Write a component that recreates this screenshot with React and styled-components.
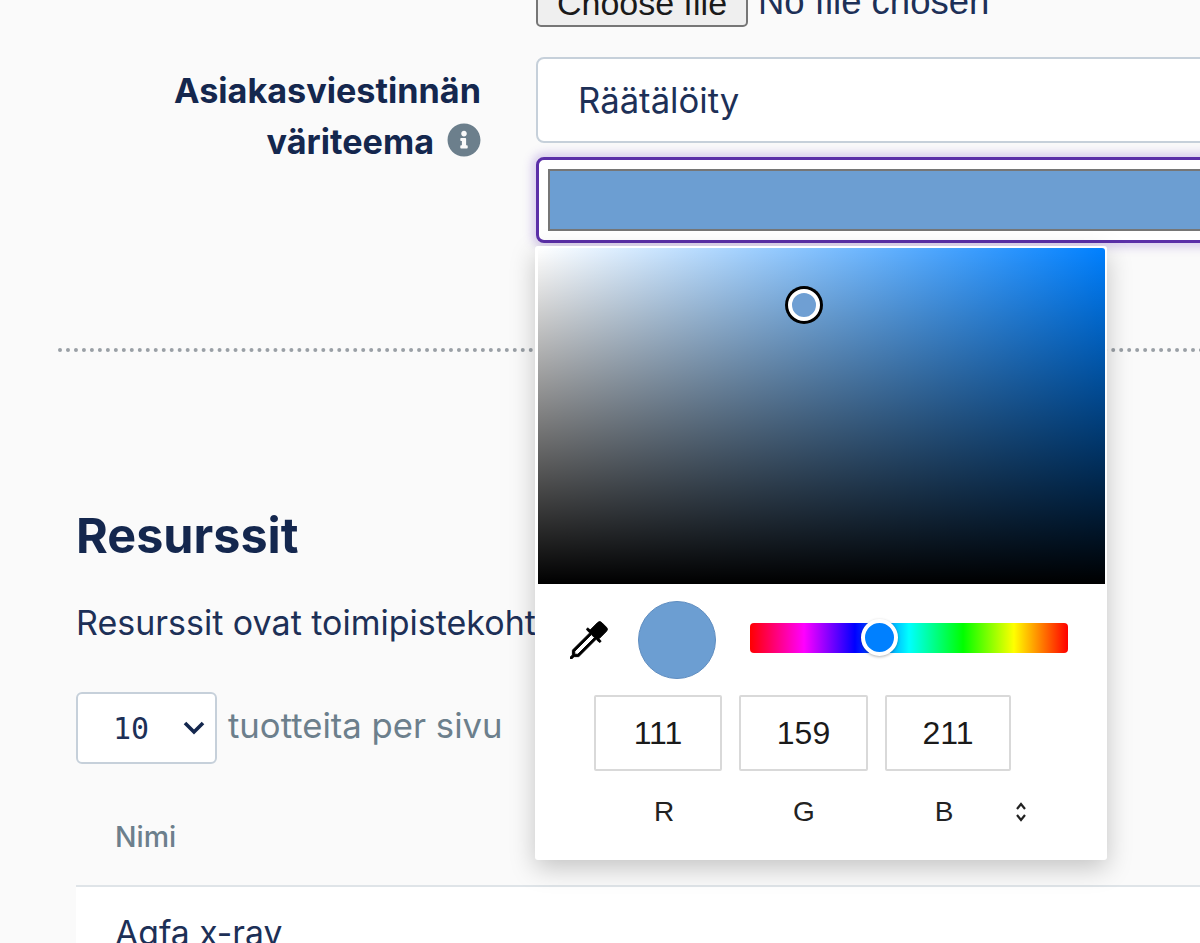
import React from "react";
import styled, { createGlobalStyle } from "styled-components";
import { BsEyedropper } from "react-icons/bs";
import { FaInfoCircle } from "react-icons/fa";

const GlobalStyle = createGlobalStyle`
  html, body {
    margin: 0;
    padding: 0;
    height: 100%;
    overflow: hidden;
    background: #fafafa;
  }
  * {
    box-sizing: border-box;
  }
`;

const Page = styled.div`
  width: 1200px;
  height: 943px;
  overflow: hidden;
  font-family: Inter, "Liberation Sans", sans-serif;
  color: #14274e;
`;

const Content = styled.div`
  width: 1500px;
`;

const FileRow = styled.div`
  display: flex;
  align-items: center;
  gap: 10px;
  margin: -13px 0 0 536px;
  font-family: "Liberation Sans", Arial, sans-serif;
  color: #1d3057;
`;

const FileButton = styled.button`
  width: 212px;
  height: 40px;
  padding: 0 0 11px;
  background: #efefef;
  border: 2px solid #767676;
  border-radius: 5px;
  font-family: inherit;
  font-size: 34px;
  line-height: 28px;
  color: #1a1a1a;
`;

const FileStatus = styled.span`
  margin-top: -11px;
  font-size: 36.5px;
  line-height: 36px;
`;

const ThemeRow = styled.div`
  display: grid;
  grid-template-columns: 423px 1fr;
  column-gap: 55px;
  margin: 30px 0 0 58px;
`;

const FieldLabel = styled.label`
  padding-top: 8px;
  text-align: right;
  font-size: 34.2px;
  font-weight: 700;
  line-height: 51px;
  color: #14274e;
`;

const InfoIcon = styled(FaInfoCircle)`
  width: 34px;
  height: 34px;
  margin-left: 13px;
  vertical-align: -3px;
  color: #6c7f8c;
`;

const Fields = styled.div`
  display: flex;
  flex-direction: column;
  gap: 14px;
`;

const ThemeSelect = styled.div`
  height: 86px;
  padding-left: 40px;
  display: flex;
  align-items: center;
  background: #fff;
  border: 2px solid #c6d0da;
  border-radius: 8px;
  font-size: 34.7px;
  color: #1d3057;
`;

const ColorField = styled.div`
  position: relative;
  height: 86px;
  padding: 9px;
  background: #fff;
  border: 3px solid #5b2fa8;
  border-radius: 8px;
  box-shadow: 0 0 10px 4px rgba(122, 80, 200, 0.28);
`;

const ColorFill = styled.div`
  height: 100%;
  background: #6c9ed2;
  border: 2px solid #767676;
`;

const Popover = styled.div`
  position: absolute;
  top: 86px;
  left: -4px;
  z-index: 2;
  width: 572px;
  height: 614px;
  padding: 2px 2px 2px 3px;
  background: #fff;
  border-radius: 3px;
  box-shadow: 0 8px 26px rgba(0, 0, 0, 0.22);
  font-family: "Liberation Sans", Arial, sans-serif;
  color: #1a1a1a;
`;

const Saturation = styled.div`
  position: relative;
  height: 336px;
  border-radius: 3px 3px 0 0;
  background:
    linear-gradient(to bottom, rgba(0, 0, 0, 0), #000),
    linear-gradient(to right, #fff, #0080ff);
`;

const SatHandle = styled.span`
  position: absolute;
  left: 250px;
  top: 41px;
  width: 32px;
  height: 32px;
  border-radius: 50%;
  background: #6f9fd3;
  border: 4px solid #fff;
  box-shadow: 0 0 0 3px #000;
`;

const Controls = styled.div`
  display: flex;
  align-items: center;
  height: 78px;
  margin-top: 17px;
  padding-left: 32px;
`;

const DropperIcon = styled(BsEyedropper)`
  width: 38px;
  height: 38px;
  color: #000;
  stroke: #000;
  stroke-width: 0.4px;
`;

const Swatch = styled.span`
  width: 78px;
  height: 78px;
  margin-left: 30px;
  border-radius: 50%;
  background: #6c9ed2;
  border: 1px solid #5f8dc0;
`;

const HueTrack = styled.div`
  position: relative;
  width: 318px;
  height: 30px;
  margin: 0 0 5px 34px;
  border-radius: 4px;
  background: linear-gradient(
    to right,
    #f00 0%,
    #f0f 17%,
    #00f 33%,
    #0ff 50%,
    #0f0 67%,
    #ff0 83%,
    #f00 100%
  );
`;

const HueThumb = styled.span`
  position: absolute;
  left: 111px;
  top: -4px;
  width: 37px;
  height: 37px;
  border-radius: 50%;
  background: #0080ff;
  border: 4px solid #fff;
  box-shadow: 0 1px 3px rgba(0, 0, 0, 0.3);
`;

const InputsRow = styled.div`
  display: flex;
  gap: 17px;
  margin: 16px 0 0 56px;
`;

const ChannelInput = styled.input`
  width: ${(props) => props.$width}px;
  height: 76px;
  padding: 0;
  text-align: center;
  font-family: "Liberation Sans", Arial, sans-serif;
  font-size: 32px;
  color: #1a1a1a;
  background: #fff;
  border: 2px solid #d9d9d9;
  border-radius: 2px;
  outline: none;
`;

const LabelsRow = styled.div`
  display: flex;
  align-items: center;
  height: 32px;
  margin-top: 25px;
  font-size: 28px;
  color: #222;
`;

const ChannelLabel = styled.span`
  width: ${(props) => props.$width}px;
  margin-left: ${(props) => props.$offset || 0}px;
  text-align: center;
`;

const SortIcon = styled.svg`
  margin-left: 20px;
`;

const Divider = styled.hr`
  margin: 105px 0 0 58px;
  border: none;
  border-top: 4px dotted #9aa0a6;
`;

const ResourcesSection = styled.section`
  margin: 158px 0 0 76px;
`;

const Heading = styled.h2`
  margin: 0;
  font-size: 48.5px;
  font-weight: 700;
  line-height: 52px;
  color: #14274e;
`;

const Description = styled.p`
  margin: 40px 0 0;
  font-size: 34px;
  line-height: 42px;
  color: #1d3057;
`;

const PerPageRow = styled.div`
  display: flex;
  align-items: center;
  gap: 11px;
  margin-top: 48px;
`;

const PerPageSelect = styled.div`
  display: flex;
  align-items: center;
  justify-content: space-between;
  width: 141px;
  height: 72px;
  padding: 0 9px 0 35px;
  background: #fff;
  border: 2px solid #c6d0da;
  border-radius: 6px;
  font-family: "DejaVu Sans Mono", monospace;
  font-size: 30px;
  color: #1d3057;
`;

const PerPageText = styled.span`
  padding-bottom: 7px;
  font-size: 34.7px;
  color: #6c7f8c;
`;

const TableHead = styled.div`
  display: flex;
  align-items: center;
  height: 98px;
  margin-top: 25px;
  padding: 0 0 2px 39px;
  border-bottom: 2px solid #dfe4e8;
  font-size: 28.5px;
  font-weight: 500;
  color: #6c7f8c;
`;

const TableRow = styled.div`
  padding: 25px 0 0 39px;
  height: 100px;
  background: #fff;
  font-size: 33.7px;
  color: #1d3057;
`;

const Chevron = () => (
  <svg width="24" height="16" viewBox="0 0 24 16" fill="none">
    <path d="M3 3l9 9 9-9" stroke="#14274e" strokeWidth="3.6" />
  </svg>
);

const SortArrows = () => (
  <SortIcon width="14" height="22" viewBox="0 0 14 22" fill="none">
    <path d="M3 8l4-5 4 5M3 14l4 5 4-5" stroke="#222" strokeWidth="2.2" />
  </SortIcon>
);

const App = () => {
  return (
    <Page>
      <GlobalStyle />
      <Content>
        <FileRow>
          <FileButton>Choose file</FileButton>
          <FileStatus>No file chosen</FileStatus>
        </FileRow>
        <ThemeRow>
          <FieldLabel>
            Asiakasviestinnän
            <br />
            väriteema
            <InfoIcon />
          </FieldLabel>
          <Fields>
            <ThemeSelect>Räätälöity</ThemeSelect>
            <ColorField>
              <ColorFill />
              <Popover>
                <Saturation>
                  <SatHandle />
                </Saturation>
                <Controls>
                  <DropperIcon />
                  <Swatch />
                  <HueTrack>
                    <HueThumb />
                  </HueTrack>
                </Controls>
                <InputsRow>
                  <ChannelInput $width={128} value="111" readOnly />
                  <ChannelInput $width={129} value="159" readOnly />
                  <ChannelInput $width={126} value="211" readOnly />
                </InputsRow>
                <LabelsRow>
                  <ChannelLabel $width={252}>R</ChannelLabel>
                  <ChannelLabel $width={28}>G</ChannelLabel>
                  <ChannelLabel $width={100} $offset={76}>B</ChannelLabel>
                  <SortArrows />
                </LabelsRow>
              </Popover>
            </ColorField>
          </Fields>
        </ThemeRow>
        <Divider />
        <ResourcesSection>
          <Heading>Resurssit</Heading>
          <Description>Resurssit ovat toimipistekohtaisia</Description>
          <PerPageRow>
            <PerPageSelect>
              10
              <Chevron />
            </PerPageSelect>
            <PerPageText>tuotteita per sivu</PerPageText>
          </PerPageRow>
          <TableHead>Nimi</TableHead>
          <TableRow>Agfa x-ray</TableRow>
        </ResourcesSection>
      </Content>
    </Page>
  );
};

export default App;
